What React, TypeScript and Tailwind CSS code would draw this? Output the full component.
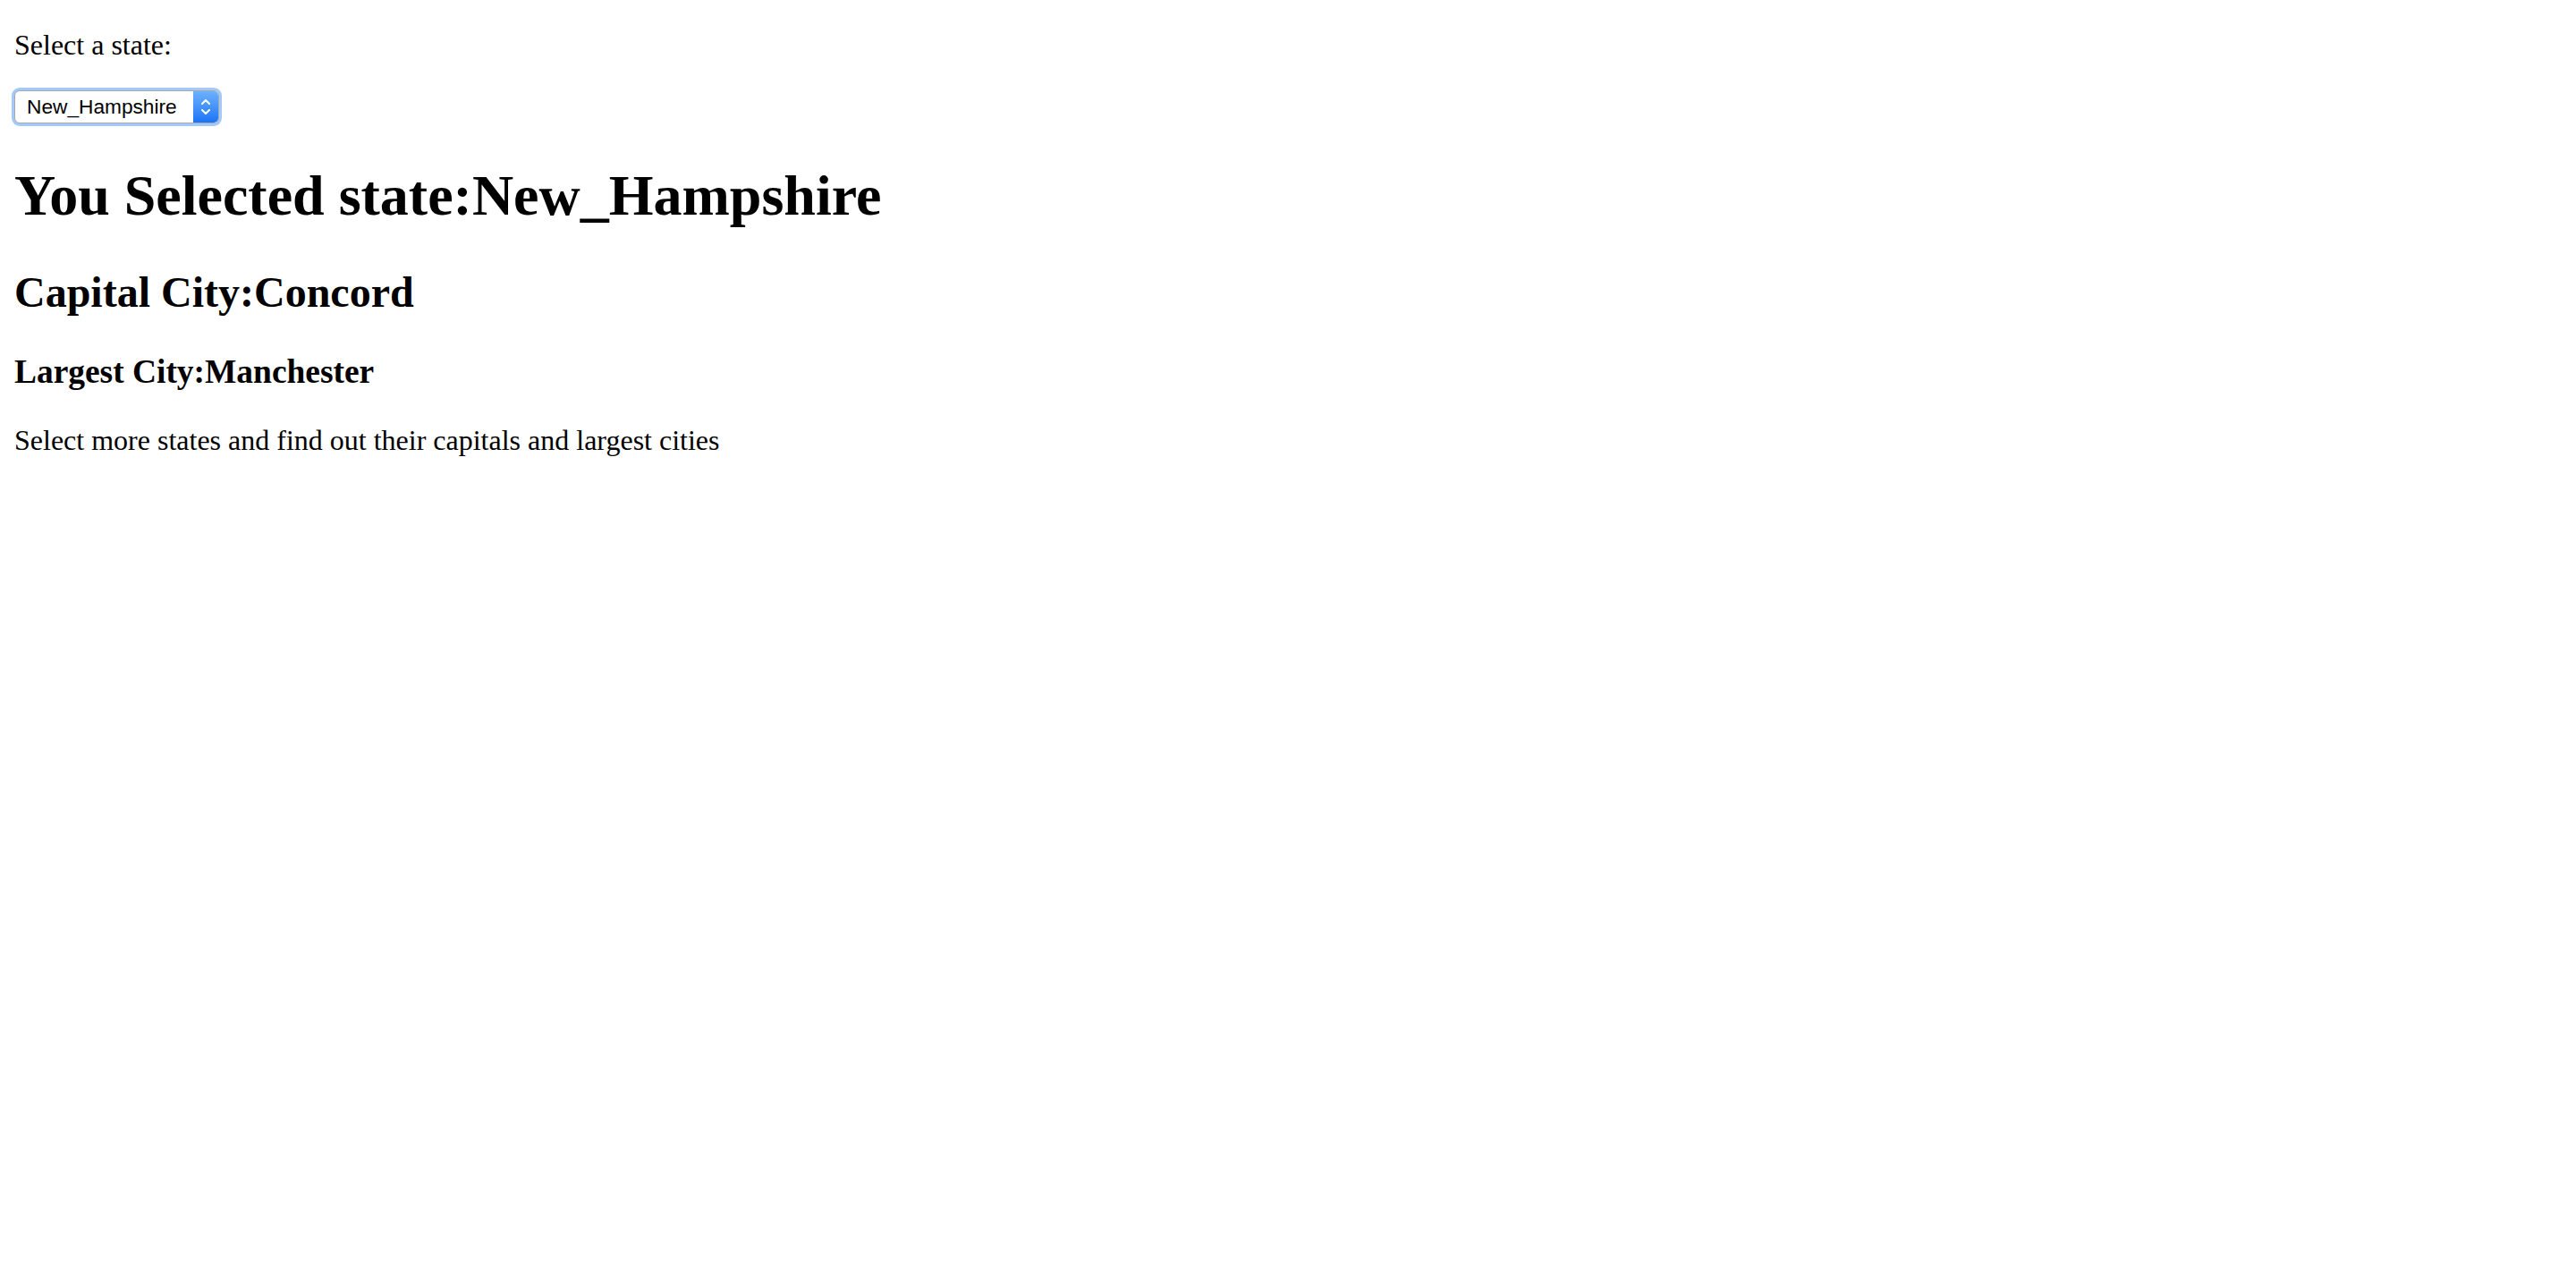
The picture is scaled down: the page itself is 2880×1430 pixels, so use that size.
import React from "react";

export default function App() {
  return (
    <div className="m-[16px] font-['Liberation_Serif','Times_New_Roman',serif] text-black">
      <p className="my-[32px] text-[32px] leading-[normal]">Select a state:</p>
      <div className="flex h-[38px] items-start">
        <div className="flex h-[37px] w-[229px] overflow-hidden rounded-[6px] border border-[#a9a9a9] bg-white ring-[3px] ring-[#a3c9fb]">
          <div className="flex flex-1 items-center pl-[13px] font-['Liberation_Sans',Arial,sans-serif] text-[22.7px] leading-none text-black">
            New_Hampshire
          </div>
          <div className="flex w-[28px] flex-col items-center justify-center gap-[5px] bg-gradient-to-b from-[#6db1fd] to-[#1873f6]">
            <svg width="10" height="6" viewBox="0 0 10 6" fill="none">
              <path d="M1 5L5 1L9 5" stroke="white" strokeWidth="2" strokeLinecap="round" strokeLinejoin="round" />
            </svg>
            <svg width="10" height="6" viewBox="0 0 10 6" fill="none">
              <path d="M1 1L5 5L9 1" stroke="white" strokeWidth="2" strokeLinecap="round" strokeLinejoin="round" />
            </svg>
          </div>
        </div>
      </div>
      <h1 className="my-[42.88px] text-[64px] font-bold leading-[normal]">You Selected state:New_Hampshire</h1>
      <h2 className="my-[39.84px] text-[48px] font-bold leading-[normal]">Capital City:Concord</h2>
      <h3 className="my-[37.44px] text-[37.44px] font-bold leading-[normal]">Largest City:Manchester</h3>
      <p className="my-[32px] text-[32px] leading-[normal]">Select more states and find out their capitals and largest cities</p>
    </div>
  );
}
